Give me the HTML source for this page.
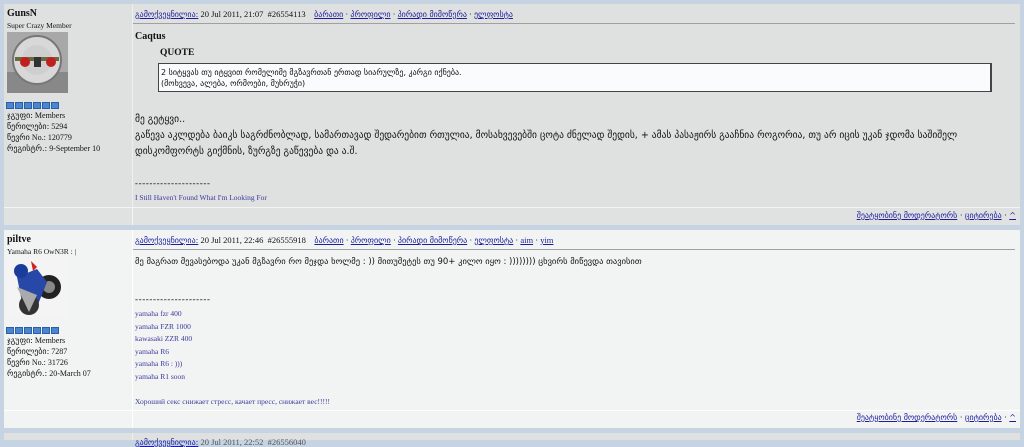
<!DOCTYPE html>
<html><head><meta charset="utf-8"><style>
*{margin:0;padding:0;box-sizing:border-box}
body{width:1024px;height:440px;overflow:hidden;background:#c6d3e2;font-family:"Liberation Serif","DejaVu Sans",serif;font-size:9px;color:#111;position:relative}
.a{position:absolute;white-space:nowrap}
.g{font-family:"DejaVu Sans","Liberation Sans",sans-serif;font-size:8px}
a,.l{color:#1c1c9c;text-decoration:underline}
.s{color:#3a3a9a}
.pip{display:inline-block;width:8px;height:7px;background:#4a86d0;border:1px solid #2a5fa8;margin-right:1px}
</style></head><body>
<!-- post1 -->
<div class="a" style="left:4px;top:4px;width:1016px;height:203px;background:#dfe0e0"></div>
<div class="a" style="left:132px;top:4px;width:1px;height:221px;background:#eef0f0"></div>
<div class="a" style="left:4px;top:207px;width:1016px;height:1px;background:#f4f4f4"></div>
<div class="a" style="left:4px;top:208px;width:1016px;height:17px;background:#e0e1e1"></div>
<div class="a" style="left:132px;top:207px;width:1px;height:18px;background:#f4f4f4"></div>
<div class="a" style="left:133px;top:23px;width:882px;height:1px;background:#a0a0a0"></div>

<div class="a" style="left:7px;top:8px;font-weight:bold;font-size:10px">GunsN</div>
<div class="a" style="left:7px;top:21px;font-size:7.5px">Super Crazy Member</div>
<div class="a" style="left:7px;top:32px;width:61px;height:61px;background:#9c9c9c">
<svg width="61" height="61"><rect width="61" height="61" fill="#a8a8a8"/><rect y="40" width="61" height="21" fill="#888"/><circle cx="30" cy="28" r="24" fill="#d8d8d8" stroke="#777" stroke-width="2"/><circle cx="30" cy="28" r="15" fill="#cfcfcf"/><rect x="8" y="25" width="44" height="4" fill="#6a6a3a"/><circle cx="18" cy="30" r="5" fill="#c02020"/><circle cx="44" cy="30" r="5" fill="#c02020"/><rect x="27" y="25" width="7" height="10" fill="#333"/></svg></div>
<div class="a" style="left:6px;top:101px"><span class="pip"></span><span class="pip"></span><span class="pip"></span><span class="pip"></span><span class="pip"></span><span class="pip"></span></div>
<div class="a" style="left:7px;top:110px;line-height:11px;font-size:8px"><span class="g">ჯგუფი:</span> Members<br><span class="g">წერილები:</span> 5294<br><span class="g">წევრი</span> No.: 120779<br><span class="g">რეგისტრ.:</span> 9-September 10</div>

<div class="a" style="left:135px;top:9px;font-size:8.5px"><span class="l g">გამოქვეყნილია:</span> 20 Jul 2011, 21:07 &nbsp;#26554113 &nbsp;&nbsp;&nbsp;<span class="l g">ბარათი</span> · <span class="l g">პროფილი</span> · <span class="l g">პირადი მიმოწერა</span> · <span class="l g">ელფოსტა</span></div>
<div class="a" style="left:135px;top:31px;font-weight:bold;font-size:10px">Caqtus</div>
<div class="a" style="left:160px;top:48px;font-weight:bold;font-size:9.5px">QUOTE</div>
<div class="a g" style="left:158px;top:63px;width:834px;height:29px;background:#fafbfd;border:1px solid #444;border-right-width:2px;padding:3px 2px;line-height:11px;font-size:8px">2 სიტყვას თუ იტყვით რომელიმე მგზავრთან ერთად სიარულზე, კარგი იქნება.<br>(მოხვევა, ალება, ორმოები, მუხრუჭი)</div>
<div class="a g" style="left:135px;top:112px;line-height:16px;font-size:9.5px">მე გეტყვი..<br>გაწევა აკლდება ბაიკს საგრძნობლად, სამართავად შედარებით რთულია, მოსახვევებში ცოტა ძნელად შედის, + ამას პასაჟირს გააჩნია როგორია, თუ არ იცის უკან ჯდომა საშიშელ<br>დისკომფორტს გიქმნის, ზურგზე გაწევება და ა.შ.</div>
<div class="a" style="left:135px;top:178px;letter-spacing:0.6px">---------------------</div>
<div class="a s" style="left:135px;top:193px;font-size:7.5px">I Still Haven't Found What I'm Looking For</div>
<div class="a g" style="right:8px;top:211px;font-size:8px"><span class="l">შეატყობინე მოდერატორს</span> · <span class="l">ციტირება</span> · <span class="l">^</span></div>

<!-- post2 -->
<div class="a" style="left:4px;top:230px;width:1016px;height:198px;background:#f2f4f4"></div>
<div class="a" style="left:132px;top:230px;width:1px;height:198px;background:#fff"></div>
<div class="a" style="left:4px;top:410px;width:1016px;height:1px;background:#fff"></div>
<div class="a" style="left:133px;top:249px;width:882px;height:1px;background:#a0a0a0"></div>
<div class="a" style="left:7px;top:234px;font-weight:bold;font-size:10px">piltve</div>
<div class="a" style="left:7px;top:247px;font-size:7.5px">Yamaha R6 OwN3R : |</div>
<div class="a" style="left:7px;top:257px;width:61px;height:61px">
<svg width="61" height="61"><rect width="61" height="61" fill="#f4f4f4"/><circle cx="42" cy="30" r="12" fill="#222"/><circle cx="42" cy="30" r="6" fill="#888"/><path d="M10 20 L30 12 L40 25 L30 50 L15 45 Z" fill="#2848a8"/><circle cx="14" cy="14" r="7" fill="#1a3c9a"/><path d="M24 4 L30 10 L26 14Z" fill="#d02020"/><circle cx="22" cy="48" r="10" fill="#333"/><path d="M10 30 L30 38 L22 55 Z" fill="#aaa"/></svg></div>
<div class="a" style="left:6px;top:326px"><span class="pip"></span><span class="pip"></span><span class="pip"></span><span class="pip"></span><span class="pip"></span><span class="pip"></span></div>
<div class="a" style="left:7px;top:335px;line-height:11px;font-size:8px"><span class="g">ჯგუფი:</span> Members<br><span class="g">წერილები:</span> 7287<br><span class="g">წევრი</span> No.: 31726<br><span class="g">რეგისტრ.:</span> 20-March 07</div>
<div class="a" style="left:135px;top:235px;font-size:8.5px"><span class="l g">გამოქვეყნილია:</span> 20 Jul 2011, 22:46 &nbsp;#26555918 &nbsp;&nbsp;&nbsp;<span class="l g">ბარათი</span> · <span class="l g">პროფილი</span> · <span class="l g">პირადი მიმოწერა</span> · <span class="l g">ელფოსტა</span> · <span class="l">aim</span> · <span class="l">yim</span></div>
<div class="a g" style="left:135px;top:257px;font-size:8.5px">მე მაგრათ მევასებოდა უკან მგზავრი რო მეჯდა ხოლმე : )) მითუმეტეს თუ 90+ კილო იყო : )))))))) ცხვირს მიწევდა თავისით</div>
<div class="a" style="left:135px;top:294px;letter-spacing:0.6px">---------------------</div>
<div class="a s" style="left:135px;top:308px;line-height:12.6px;font-size:7.5px">yamaha fzr 400<br>yamaha FZR 1000<br>kawasaki ZZR 400<br>yamaha R6<br>yamaha R6 : )))<br>yamaha R1 soon</div>
<div class="a s" style="left:135px;top:397px;font-size:7.5px">Хороший секс снижает стресс, качает пресс, снижает вес!!!!!</div>
<div class="a g" style="right:8px;top:413px;font-size:8px"><span class="l">შეატყობინე მოდერატორს</span> · <span class="l">ციტირება</span> · <span class="l">^</span></div>

<!-- post3 -->
<div class="a" style="left:4px;top:433px;width:1016px;height:7px;background:#dfe0e0"></div>
<div class="a" style="left:132px;top:433px;width:1px;height:7px;background:#eef0f0"></div>
<div class="a" style="left:135px;top:437px;font-size:8.5px;color:#555"><span class="l g">გამოქვეყნილია:</span> 20 Jul 2011, 22:52 &nbsp;#26556040</div>
</body></html>
